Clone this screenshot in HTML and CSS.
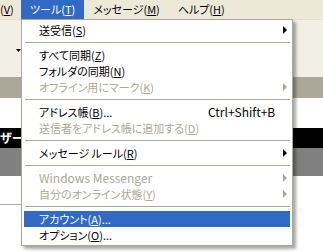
FILE: index.html
```html
<!DOCTYPE html>
<html lang="ja">
<head>
<meta charset="utf-8">
<title>ツール メニュー</title>
<link rel="stylesheet" href="styles.css">
</head>
<body>
<div class="screen">
  <div class="menubar">
    <span class="mb-item mb-first">(<u>V</u>)</span>
    <span class="mb-item mb-active">ツール(<u>T</u>)</span>
    <span class="mb-item">メッセージ(<u>M</u>)</span>
    <span class="mb-item">ヘルプ(<u>H</u>)</span>
  </div>
  <div class="toolbar">
    <svg class="drop" width="5" height="3" viewBox="0 0 5 3"><path d="M0 0h5L2.5 3z" fill="#000"/></svg>
  </div>
  <div class="band band-gray"></div>
  <div class="band band-white"></div>
  <div class="band band-black"><span class="band-title">ザー</span></div>
  <div class="band band-dark"></div>
  <div class="band band-bottom"><div class="rule"></div></div>

  <div class="menu">
    <div class="row"><span>送受信(<u>S</u>)</span><span class="arrow"></span></div>
    <div class="sep"></div>
    <div class="row"><span>すべて同期(<u>Z</u>)</span></div>
    <div class="row"><span>フォルダの同期(<u>N</u>)</span></div>
    <div class="row disabled"><span>オフライン用にマーク(<u>K</u>)</span><span class="arrow"></span></div>
    <div class="sep"></div>
    <div class="row"><span>アドレス帳(<u>B</u>)...</span><span class="key">Ctrl+Shift+B</span></div>
    <div class="row disabled"><span>送信者をアドレス帳に追加する(<u>D</u>)</span></div>
    <div class="sep"></div>
    <div class="row"><span>メッセージ ルール(<u>R</u>)</span><span class="arrow"></span></div>
    <div class="sep"></div>
    <div class="row disabled"><span class="latin">Windows Messenger</span><span class="arrow"></span></div>
    <div class="row disabled"><span>自分のオンライン状態(<u>Y</u>)</span><span class="arrow"></span></div>
    <div class="sep"></div>
    <div class="row selected"><span>アカウント(<u>A</u>)...</span></div>
    <div class="row"><span>オプション(<u>O</u>)...</span></div>
  </div>
</div>
</body>
</html>
```
FILE: styles.css
```css
html, body {
  margin: 0;
  padding: 0;
}
body {
  width: 323px;
  height: 252px;
  overflow: hidden;
  font-family: "Noto Sans CJK JP", "Noto Sans", sans-serif;
  font-size: 11px;
  font-feature-settings: "palt";
  color: #000;
  background: #fff;
}
u {
  text-decoration: underline;
  text-underline-offset: 1px;
}
.screen {
  position: relative;
  height: 252px;
  display: flex;
  flex-direction: column;
}

/* menu bar */
.menubar {
  height: 19px;
  flex: none;
  display: flex;
  background: #ECE9D8;
  line-height: 19px;
  white-space: nowrap;
}
.mb-item {
  padding: 0 9px;
}
.mb-first {
  width: 21px;
  box-sizing: border-box;
  padding: 0 8px 0 0;
  text-align: right;
}
.mb-active {
  background: #316AC5;
  color: #fff;
}

/* window content behind the menu */
.toolbar {
  height: 58px;
  flex: none;
  box-sizing: border-box;
  padding: 29px 0 0 16px;
  background: #F1EFE6;
  border-top: 1px solid #E3E0D0;
}
.drop {
  display: block;
}
.band {
  flex: none;
}
.band-gray {
  height: 21px;
  background: #ACA899;
}
.band-white {
  height: 30px;
  background: #fff;
}
.band-black {
  height: 20px;
  background: #000;
  color: #fff;
  font-size: 12px;
  font-weight: bold;
  line-height: 20px;
  white-space: nowrap;
}
.band-title {
  display: inline-block;
  padding-left: 0;
}
.band-dark {
  height: 28px;
  background: #808080;
}
.band-bottom {
  flex: 1;
  background: #fff;
  padding-top: 28px;
}
.rule {
  width: 30px;
  height: 1px;
  background: #ACA899;
}

/* drop-down menu */
.menu {
  position: absolute;
  left: 21px;
  top: 19px;
  width: 272px;
  height: 227px;
  box-sizing: border-box;
  border: 1px solid #ACA899;
  padding: 2px;
  background: #fff;
  box-shadow: 3px 3px 3px rgba(0, 0, 0, 0.35);
}
.row {
  height: 16px;
  line-height: 16px;
  display: grid;
  grid-template-columns: 1fr 79px;
  align-items: center;
  padding: 0 3px 0 15px;
  white-space: nowrap;
}
.row.disabled {
  color: #ACA899;
}
.row.selected {
  background: #316AC5;
  color: #fff;
}
.key,
.latin {
  font-size: 12px;
}
.key {
  text-align: left;
}
.arrow {
  justify-self: end;
  width: 0;
  height: 0;
  border-left: 4px solid currentColor;
  border-top: 4px solid transparent;
  border-bottom: 4px solid transparent;
}
.sep {
  height: 9px;
  box-sizing: border-box;
  padding: 4px 0 0 1px;
}
.sep::after {
  content: "";
  display: block;
  height: 1px;
  background: #ACA899;
}
```
